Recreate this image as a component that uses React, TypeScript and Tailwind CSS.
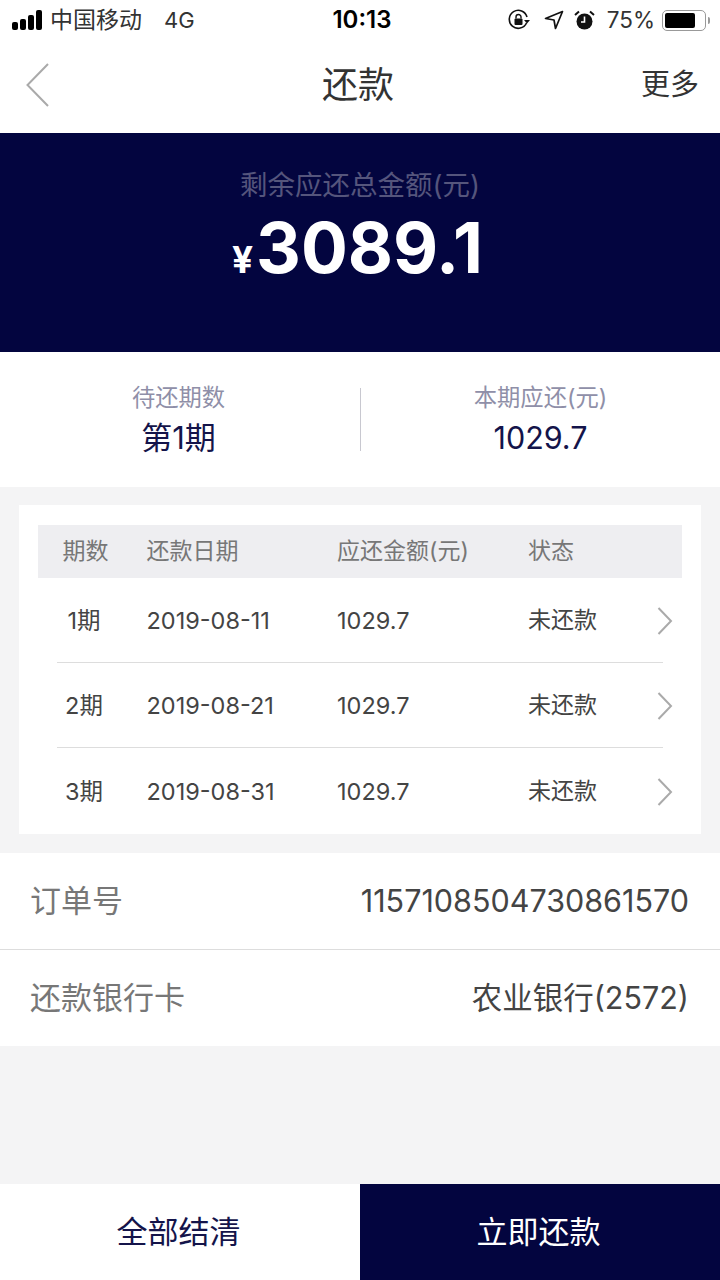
const font = "font-['Inter','Noto_Sans_CJK_SC',sans-serif]";

const rows = [
  { no: '1期', date: '2019-08-11', h: 'h-[85px] border-b border-[#ddd]' },
  { no: '2期', date: '2019-08-21', h: 'h-[85px] border-b border-[#ddd]' },
  { no: '3期', date: '2019-08-31', h: 'h-[86px]' },
];

function StatusBar() {
  return (
    <div className="flex h-[40px] items-center justify-between pl-[12px] pr-[10px] text-[23px] text-[#333]">
      <div className="flex w-[260px] items-center">
        <div className="flex items-end gap-[2px]">
          <span className="h-[8px] w-[6px] rounded-[2px] bg-black" />
          <span className="h-[11px] w-[6px] rounded-[2px] bg-black" />
          <span className="h-[15px] w-[6px] rounded-[2px] bg-black" />
          <span className="h-[20px] w-[6px] rounded-[2px] bg-black" />
        </div>
        <span className="ml-[8px]">中国移动</span>
        <span className="ml-[22px] text-[22px]">4G</span>
      </div>
      <span className="ml-[2px] text-[24px] font-semibold text-black">10:13</span>
      <div className="flex w-[260px] items-center justify-end">
        <svg width="22" height="22" viewBox="0 0 22 22" fill="none">
          <path d="M18.500 14A9 9 0 1 1 19 8" stroke="#111" strokeWidth="1.6" />
          <path d="M16 11h6l-3 3.500z" fill="#111" />
          <rect x="6.500" y="9.500" width="8" height="6.500" rx="1" fill="#111" />
          <path d="M8 9.500V8a2.500 2.500 0 0 1 5 0v1.500" stroke="#111" strokeWidth="1.4" />
        </svg>
        <svg className="ml-[14px]" width="20" height="20" viewBox="0 0 20 20" fill="none">
          <path d="M18.500 1.500 1.500 8.500l8.500 1.500 1.500 8.500z" stroke="#111" strokeWidth="1.7" strokeLinejoin="round" />
        </svg>
        <svg className="ml-[10px]" width="21" height="21" viewBox="0 0 21 21">
          <circle cx="10.500" cy="11.500" r="8" fill="#111" />
          <path d="M10.500 6.500v5.500H7" stroke="#fff" strokeWidth="1.6" fill="none" />
          <path d="M1 5l4-3.500M20 5l-4-3.500" stroke="#111" strokeWidth="2" />
        </svg>
        <span className="ml-[12px] text-[22.5px]">75%</span>
        <div className="ml-[7px] flex h-[21px] w-[44px] items-center rounded-[5px] border border-[#999] p-[2px]">
          <span className="h-full w-[30px] rounded-[2px] bg-black" />
        </div>
        <span className="ml-[2px] h-[7px] w-[2px] rounded-r-full bg-[#999]" />
      </div>
    </div>
  );
}

function Chevron() {
  return (
    <svg className="-mr-[10px] shrink-0" width="16" height="28" viewBox="0 0 16 28" fill="none">
      <path d="M1.500 1 14 14 1.500 27" stroke="#aaa" strokeWidth="2" />
    </svg>
  );
}

export default function App() {
  return (
    <div className={`flex h-[1280px] w-[720px] flex-col overflow-hidden bg-[#f4f4f5] ${font}`}>
      <div className="bg-white">
        <StatusBar />
        <div className="flex h-[93px] items-center justify-between pb-[3px] pl-[26px] pr-[21px]">
          <svg width="23" height="44" viewBox="0 0 23 44" fill="none">
            <path d="M22 1 1.500 22 22 43" stroke="#aaa" strokeWidth="2" />
          </svg>
          <span className="ml-[26px] text-[36px] text-[#333]">还款</span>
          <span className="text-[29px] text-[#333]">更多</span>
        </div>
      </div>

      <div className="flex h-[219px] flex-col items-center bg-[#03053f] pt-[34px]">
        <span className="text-[27.5px] leading-[36px] text-[#55557c]">剩余应还总金额(元)</span>
        <div className="mt-[3px] flex items-baseline pr-[5px] text-white">
          <span className="mr-[3px] text-[37px] font-bold">¥</span>
          <span className="text-[69.5px] font-bold leading-[84px]">3089.1</span>
        </div>
      </div>

      <div className="flex h-[135px] items-center bg-white">
        <div className="flex w-[360px] shrink-0 flex-col items-center pr-[3px]">
          <span className="text-[23.3px] leading-[32px] text-[#8f8fa8]">待还期数</span>
          <span className="mt-[4px] text-[31px] leading-[40px] text-[#14144a]">第1期</span>
        </div>
        <div className="h-[63px] w-px bg-[#c8c8d0]" />
        <div className="flex flex-1 flex-col items-center">
          <span className="text-[23.3px] leading-[32px] text-[#8f8fa8]">本期应还(元)</span>
          <span className="mt-[4px] text-[30.5px] leading-[40px] text-[#14144a]">1029.7</span>
        </div>
      </div>

      <div className="px-[19px] pb-[19px] pt-[18px]">
        <div className="bg-white px-[19px] pt-[20px]">
          <div className="flex h-[53px] items-center bg-[#eeeef1] text-[23px] text-[#777]">
            <span className="w-[108.5px] pl-[24.5px]">期数</span>
            <span className="w-[190.5px]">还款日期</span>
            <span className="w-[191px]">应还金额(元)</span>
            <span>状态</span>
          </div>
          {rows.map((row) => (
            <div key={row.no} className={`mx-[19px] flex items-center pt-[1px] text-[23.5px] text-[#444] ${row.h}`}>
              <span className="w-[89.5px] shrink-0 pr-[35.5px] text-center">{row.no}</span>
              <span className="w-[190.5px] shrink-0">{row.date}</span>
              <span className="w-[191px] shrink-0">1029.7</span>
              <span className="w-[129px] shrink-0 text-[23px]">未还款</span>
              <Chevron />
            </div>
          ))}
        </div>
      </div>

      <div className="bg-white text-[30.5px]">
        <div className="flex h-[97px] items-center justify-between border-b border-[#ddd] pl-[30px] pr-[31px]">
          <span className="text-[31px] text-[#777]">订单号</span>
          <span className="text-[#444]">1157108504730861570</span>
        </div>
        <div className="flex h-[96px] items-center justify-between pl-[30px] pr-[31px]">
          <span className="text-[31px] text-[#777]">还款银行卡</span>
          <span className="text-[#444]">农业银行(2572)</span>
        </div>
      </div>

      <div className="mt-auto flex h-[96px] text-[31px]">
        <div className="flex flex-1 items-center justify-center bg-white pr-[3px] text-[#14144a]">全部结清</div>
        <div className="flex flex-1 items-center justify-center bg-[#03053f] pr-[3px] text-white">立即还款</div>
      </div>
    </div>
  );
}
